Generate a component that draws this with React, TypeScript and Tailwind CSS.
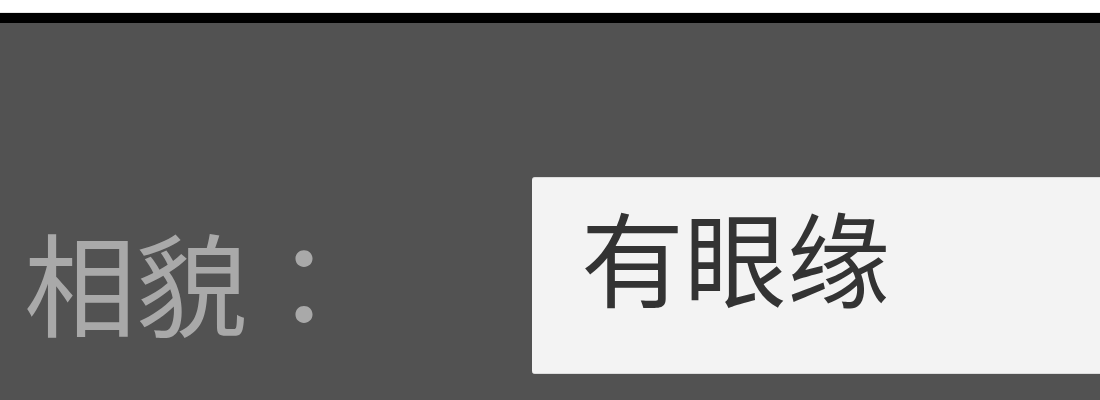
import React from "react";

const App = () => {
  return (
    <div className="w-[1100px] h-[400px] overflow-hidden bg-[#525252] font-['Noto_Sans_CJK_SC','Noto_Sans',sans-serif]">
      <div className="h-[13px] bg-white border-b border-[#e6e6e6]" />
      <div className="h-[10px] bg-black" />
      <div className="flex items-center mt-[154px]">
        <div className="w-[532px] pl-[24px] pt-[8px] text-[112px] leading-none text-[#a9a9a9] font-['Noto_Sans_CJK_TC',sans-serif]">相貌：</div>
        <div className="flex-1 h-[197px] flex items-center bg-[#f3f3f3] border-y border-[#dcdcdc] rounded-l-[3px] pl-[49px]">
          <span className="text-[103px] leading-none text-[#333333] -mt-[40px]">有眼缘</span>
        </div>
      </div>
    </div>
  );
};

export default App;
